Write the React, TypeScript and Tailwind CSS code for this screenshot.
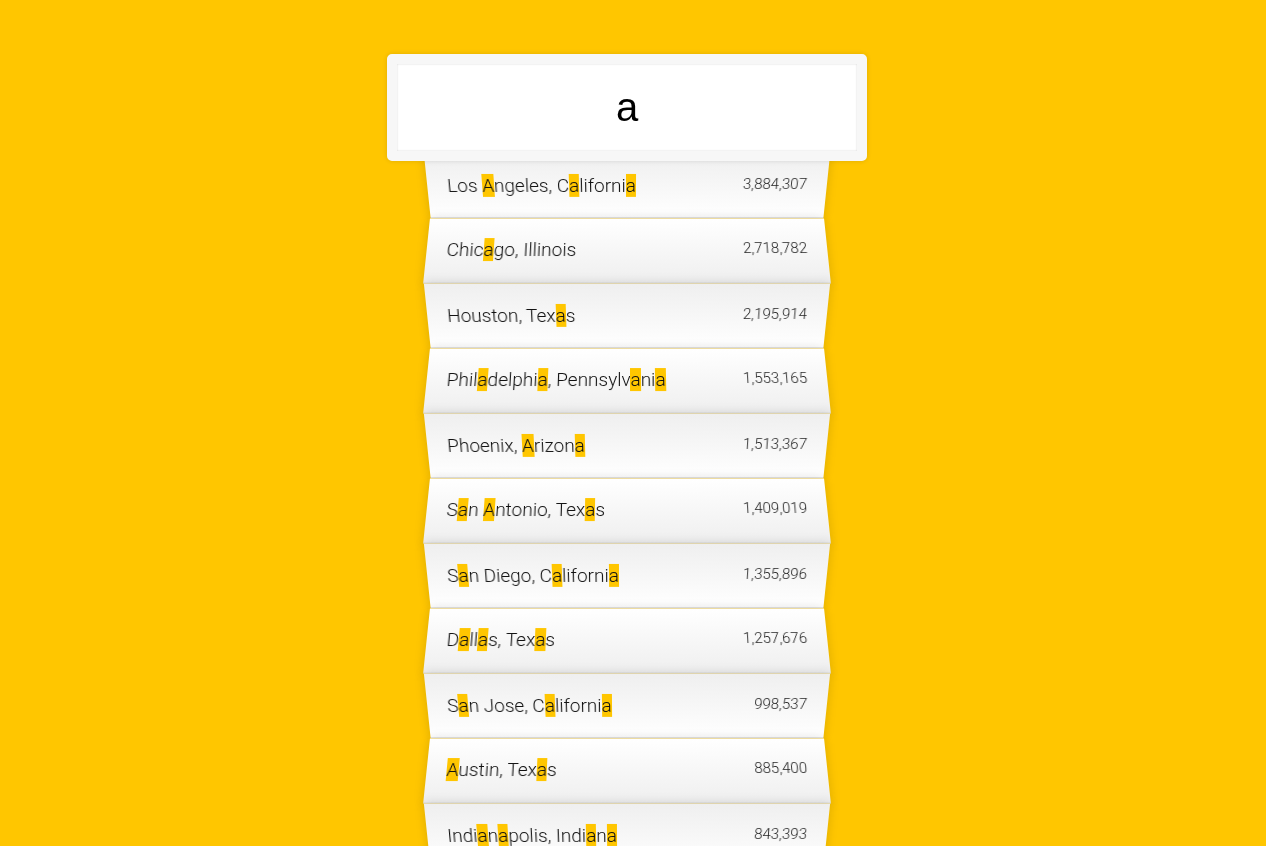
import { useEffect, useRef, useState } from "react";

const cities = [
  { city: "Los Angeles", state: "California", population: "3884307" },
  { city: "Chicago", state: "Illinois", population: "2718782" },
  { city: "Houston", state: "Texas", population: "2195914" },
  { city: "Philadelphia", state: "Pennsylvania", population: "1553165" },
  { city: "Phoenix", state: "Arizona", population: "1513367" },
  { city: "San Antonio", state: "Texas", population: "1409019" },
  { city: "San Diego", state: "California", population: "1355896" },
  { city: "Dallas", state: "Texas", population: "1257676" },
  { city: "San Jose", state: "California", population: "998537" },
  { city: "Austin", state: "Texas", population: "885400" },
  { city: "Indianapolis", state: "Indiana", population: "843393" },
  { city: "Jacksonville", state: "Florida", population: "842583" },
  { city: "San Francisco", state: "California", population: "837442" },
  { city: "Columbus", state: "Ohio", population: "822553" },
  { city: "Charlotte", state: "North Carolina", population: "792862" },
  { city: "Fort Worth", state: "Texas", population: "792727" },
];

function numberWithCommas(x: string) {
  return x.replace(/\B(?=(\d{3})+(?!\d))/g, ",");
}

// wrap every match of the query in a yellow span
function Highlight({ text, query }: { text: string; query: string }) {
  if (!query) return <>{text}</>;
  const escaped = query.replace(/[.*+?^${}()|[\]\\]/g, "\\$&");
  const parts = text.split(new RegExp(`(${escaped})`, "gi"));
  return (
    <>
      {parts.map((part, i) =>
        part.toLowerCase() === query.toLowerCase() ? (
          <span key={i} className="bg-[#ffc600]">
            {part}
          </span>
        ) : (
          <span key={i}>{part}</span>
        )
      )}
    </>
  );
}

export default function App() {
  const [query, setQuery] = useState("a");
  const inputRef = useRef<HTMLInputElement>(null);

  useEffect(() => {
    const el = inputRef.current;
    if (el) {
      el.focus();
      el.setSelectionRange(el.value.length, el.value.length);
    }
  }, []);

  const matches = cities.filter((place) => {
    const regex = new RegExp(query, "gi");
    return place.city.match(regex) || place.state.match(regex);
  });

  return (
    <div className="min-h-screen w-full bg-[#ffc600] font-['Roboto','Liberation_Sans',sans-serif] text-[19px] font-light text-[#111]">
      <div className="w-[1254px]">
        <form className="mx-auto w-[400px] pt-[54px]" onSubmit={(e) => e.preventDefault()}>
          {/* search box sits over the top of the list */}
          <input
            ref={inputRef}
            type="text"
            value={query}
            onChange={(e) => setQuery(e.target.value)}
            className="relative z-10 -mb-[10px] -ml-[40px] block w-[480px] rounded-[5px] border-[10px] border-[#F7F7F7] bg-white p-5 text-center font-['Liberation_Sans',sans-serif] text-[40px] leading-[47px] font-normal text-black caret-black shadow-[0_0_5px_rgba(0,0,0,0.12),inset_0_0_2px_rgba(0,0,0,0.19)] outline-none"
          />
          <ul className="relative m-0 p-0">
            {matches.map((place, i) => {
              const even = i % 2 === 1;
              return (
                <li
                  key={place.city}
                  className={
                    even
                      ? "flex items-center justify-between border-b border-[#D8D8D8] bg-linear-to-b from-white to-[#EFEFEF] p-5 capitalize shadow-[0_0_10px_rgba(0,0,0,0.14)] [transform:perspective(100px)_rotateX(3deg)_translateY(2px)_scale(1.001)]"
                      : "flex items-center justify-between border-b border-[#D8D8D8] bg-linear-to-t from-white to-[#EFEFEF] p-5 capitalize shadow-[0_0_10px_rgba(0,0,0,0.14)] [transform:perspective(100px)_rotateX(-3deg)_translateY(3px)]"
                  }
                >
                  <span className="leading-6">
                    <Highlight text={`${place.city}, ${place.state}`} query={query} />
                  </span>
                  <span className="-mt-[5px] text-[15px] leading-6 font-light text-[#222]">
                    {numberWithCommas(place.population)}
                  </span>
                </li>
              );
            })}
          </ul>
        </form>
      </div>
    </div>
  );
}
